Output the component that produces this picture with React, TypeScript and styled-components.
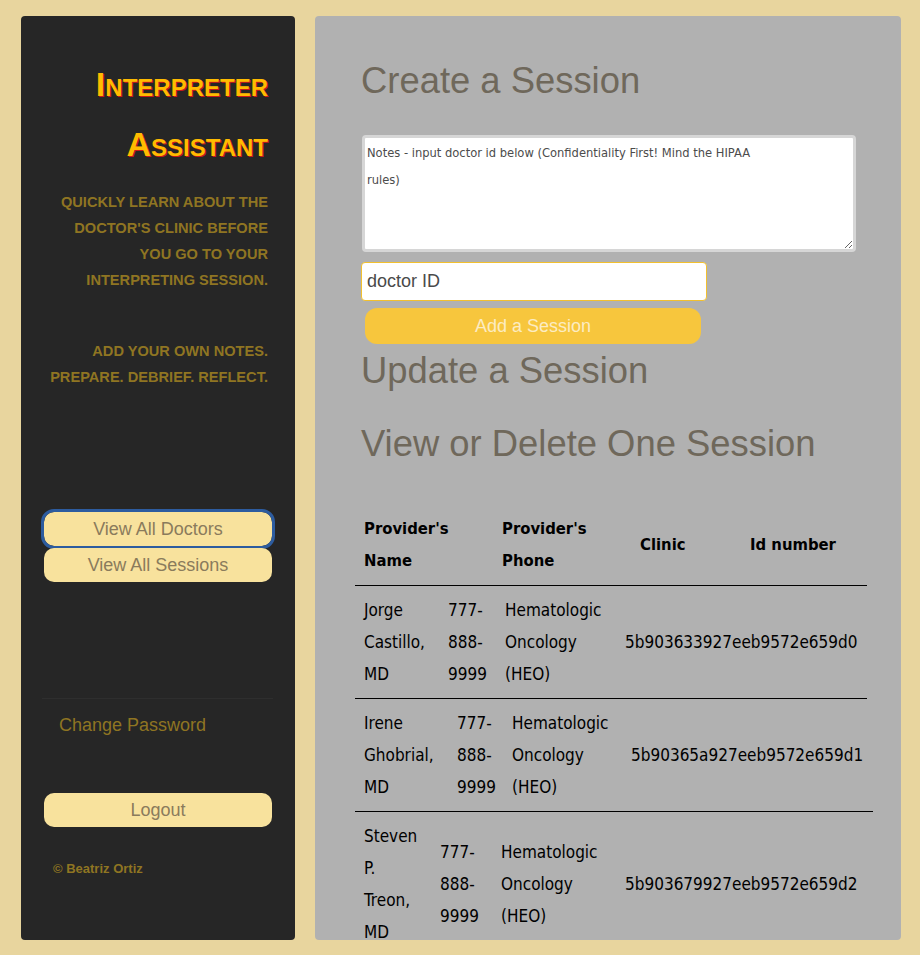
import React from "react";
import styled, { createGlobalStyle } from "styled-components";

const GlobalStyle = createGlobalStyle`
  html, body {
    margin: 0;
    padding: 0;
    background: #e8d59e;
  }
  * {
    box-sizing: border-box;
  }
`;

const Page = styled.div`
  display: flex;
  gap: 20px;
  height: 955px;
  padding: 16px 19px 15px 21px;
  background: #e8d59e;
  font-family: "Liberation Sans", Arial, sans-serif;
`;

const Sidebar = styled.aside`
  width: 274px;
  flex-shrink: 0;
  display: flex;
  flex-direction: column;
  background: #262626;
  border-radius: 4px;
  padding: 38px 27px 0 23px;
  overflow: hidden;
`;

const Brand = styled.h1`
  margin: 0;
  text-align: right;
  font-size: 34px;
  line-height: 60px;
  font-weight: bold;
  font-variant: small-caps;
  color: #ffbb00;
  text-shadow: 1px 1px 0 #c8181a;
`;

const Tagline = styled.p<{ $gap: number }>`
  margin: ${(p) => p.$gap}px 0 0;
  text-align: right;
  text-transform: uppercase;
  font-size: 14.6px;
  line-height: 26px;
  font-weight: bold;
  white-space: nowrap;
  color: #8f7522;
`;

const Nav = styled.nav`
  display: flex;
  flex-direction: column;
  gap: 2px;
  margin-top: 122px;
`;

const PillButton = styled.button<{ $focused?: boolean }>`
  display: block;
  width: 228px;
  height: 34px;
  border: none;
  border-radius: 10px;
  background: #f8e29d;
  color: #8a7b5c;
  font-family: "Liberation Sans", Arial, sans-serif;
  font-size: 18px;
  padding: 0;
  outline: ${(p) => (p.$focused ? "3px solid #2d5c9f" : "none")};
  outline-offset: 0;
`;

const Divider = styled.hr`
  width: 231px;
  margin: 116px 0 0 -2px;
  border: none;
  border-top: 1px solid #2e2e2e;
`;

const TextLink = styled.a`
  margin: 15px 0 0 15px;
  font-size: 18px;
  line-height: 22px;
  color: #8f7522;
  text-decoration: none;
`;

const LogoutWrap = styled.div`
  margin-top: 57px;
`;

const Copyright = styled.small`
  margin: 34px 0 0 9px;
  font-size: 13px;
  font-weight: bold;
  color: #8f7522;
`;

const Main = styled.main`
  flex: 1;
  background: #b1b1b1;
  border-radius: 4px;
  padding: 0 0 0 46px;
  overflow: hidden;
`;

const Heading = styled.h2<{ $top: number }>`
  margin: ${(p) => p.$top}px 0 0;
  font-size: 36.4px;
  line-height: 42px;
  font-weight: normal;
  color: #6f685b;
`;

const Notes = styled.textarea`
  display: block;
  width: 494px;
  height: 117px;
  margin: 33px 0 0 1px;
  padding: 1px 2px;
  border: 3px solid #d6d6d6;
  border-radius: 4px;
  background: #fff;
  font-family: "DejaVu Sans Condensed", "DejaVu Sans", sans-serif;
  font-size: 12.8px;
  line-height: 27px;
  resize: vertical;
  &::placeholder {
    color: #4c4c4c;
  }
`;

const IdInput = styled.input`
  display: block;
  width: 346px;
  height: 39px;
  margin-top: 10px;
  padding: 0 5px;
  border: 1px solid #f2c02e;
  border-radius: 4px;
  background: #fff;
  font-family: "Liberation Sans", Arial, sans-serif;
  font-size: 18px;
  &::placeholder {
    color: #4a4a4a;
  }
`;

const AddButton = styled.button`
  display: block;
  width: 336px;
  height: 36px;
  margin: 7px 0 0 4px;
  border: none;
  border-radius: 12px;
  background: #f7c63d;
  color: #fcecc2;
  font-family: "Liberation Sans", Arial, sans-serif;
  font-size: 18px;
`;

const Table = styled.div`
  margin: 40px 0 0 -6px;
  font-family: "DejaVu Sans Condensed", "DejaVu Sans", sans-serif;
  font-size: 17px;
  line-height: 32px;
  color: #000;
`;

const Row = styled.div<{ $cols: string; $head?: boolean }>`
  display: grid;
  grid-template-columns: ${(p) => p.$cols};
  width: max-content;
  align-items: center;
  font-size: ${(p) => (p.$head ? "16.5px" : "17px")};
  font-weight: ${(p) => (p.$head ? "bold" : "normal")};
  border-bottom: 1px solid #000;
`;

const Cell = styled.div`
  padding: 8px 9px;
  white-space: nowrap;
`;

const Line = styled.span`
  display: block;
`;

type Session = {
  name: string[];
  phone: string[];
  clinic: string[];
  id: string;
  cols: string;
};

const sessions: Session[] = [
  {
    name: ["Jorge", "Castillo,", "MD"],
    phone: ["777-", "888-", "9999"],
    clinic: ["Hematologic", "Oncology", "(HEO)"],
    id: "5b903633927eeb9572e659d0",
    cols: "84px 57px 120px 251px",
  },
  {
    name: ["Irene", "Ghobrial,", "MD"],
    phone: ["777-", "888-", "9999"],
    clinic: ["Hematologic", "Oncology", "(HEO)"],
    id: "5b90365a927eeb9572e659d1",
    cols: "93px 55px 119px 251px",
  },
  {
    name: ["Steven", "P.", "Treon,", "MD"],
    phone: ["777-", "888-", "9999"],
    clinic: ["Hematologic", "Oncology", "(HEO)"],
    id: "5b903679927eeb9572e659d2",
    cols: "76px 61px 124px 251px",
  },
];

const Lines = ({ items }: { items: string[] }) => (
  <Cell>
    {items.map((t, i) => (
      <Line key={i}>{t}</Line>
    ))}
  </Cell>
);

const SessionTable = () => (
  <Table>
    <Row $head $cols="138px 138px 110px 126px">
      <Lines items={["Provider's", "Name"]} />
      <Lines items={["Provider's", "Phone"]} />
      <Cell>Clinic</Cell>
      <Cell>Id number</Cell>
    </Row>
    {sessions.map((s) => (
      <Row key={s.id} $cols={s.cols}>
        <Lines items={s.name} />
        <Lines items={s.phone} />
        <Lines items={s.clinic} />
        <Cell>{s.id}</Cell>
      </Row>
    ))}
  </Table>
);

export default function App() {
  return (
    <>
      <GlobalStyle />
      <Page>
        <Sidebar>
          <Brand>
            Interpreter
            <br />
            Assistant
          </Brand>
          <Tagline $gap={15}>
            Quickly learn about the
            <br />
            doctor's clinic before
            <br />
            you go to your
            <br />
            interpreting session.
          </Tagline>
          <Tagline $gap={45}>
            Add your own notes.
            <br />
            Prepare. Debrief. Reflect.
          </Tagline>
          <Nav>
            <PillButton $focused>View All Doctors</PillButton>
            <PillButton>View All Sessions</PillButton>
          </Nav>
          <Divider />
          <TextLink href="#">Change Password</TextLink>
          <LogoutWrap>
            <PillButton>Logout</PillButton>
          </LogoutWrap>
          <Copyright>© Beatriz Ortiz</Copyright>
        </Sidebar>
        <Main>
          <Heading $top={44}>Create a Session</Heading>
          <Notes
            placeholder={
              "Notes - input doctor id below (Confidentiality First! Mind the HIPAA\nrules)"
            }
          />
          <IdInput placeholder="doctor ID" />
          <AddButton>Add a Session</AddButton>
          <Heading $top={6}>Update a Session</Heading>
          <Heading $top={31}>View or Delete One Session</Heading>
          <SessionTable />
        </Main>
      </Page>
    </>
  );
}
